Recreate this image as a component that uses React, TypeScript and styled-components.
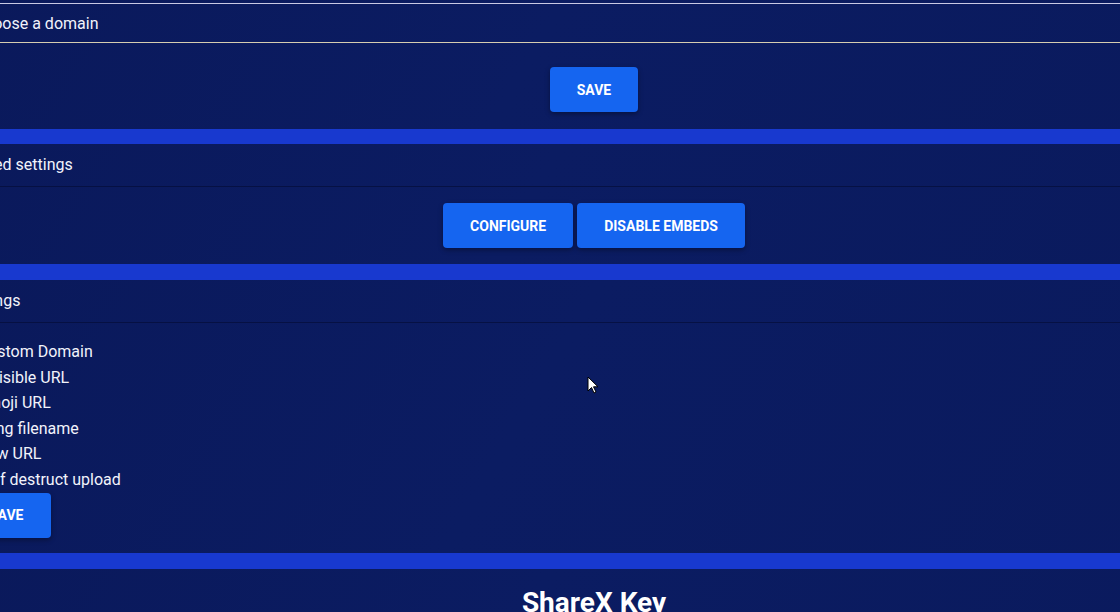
import React from "react";
import styled, { createGlobalStyle } from "styled-components";

const Global = createGlobalStyle`
  html, body {
    margin: 0;
    padding: 0;
    background: #0a1a5c;
    overflow: hidden;
    font-family: Roboto, "Liberation Sans", sans-serif;
    color: #f2f3fb;
  }
`;

const Viewport = styled.div`
  position: relative;
  width: 1120px;
  height: 612px;
  overflow: hidden;
`;

const Main = styled.main`
  margin-left: -44px;
  width: 1276px;
  display: flex;
  flex-direction: column;
  background: #1839cf;
`;

const Card = styled.section<{ $space?: number }>`
  margin-top: ${(p) => p.$space ?? 0}px;
  background: linear-gradient(120deg, #0a195b 0%, #0b1c62 45%, #0a1a5d 100%);
  display: flex;
  flex-direction: column;
`;

const CardHeader = styled.div`
  height: 40px;
  display: flex;
  align-items: center;
  padding: 0 6px 2px;
  font-size: 16px;
  border-bottom: 1px solid rgba(3, 10, 45, 0.55);
`;

const CardBody = styled.div<{ $pt: number; $pb: number; $center?: boolean }>`
  display: flex;
  flex-direction: column;
  align-items: ${(p) => (p.$center ? "center" : "flex-start")};
  padding: ${(p) => `${p.$pt}px 6px ${p.$pb}px`};
`;

const Select = styled.div`
  align-self: stretch;
  height: 38px;
  display: flex;
  align-items: center;
  padding: 0 12px;
  font-size: 16px;
  border-top: 1px solid #c9c9e4;
  border-bottom: 1px solid #d6cdb0;
  margin-bottom: 24px;
`;

const ButtonRow = styled.div`
  display: flex;
  gap: 4px;
`;

const Button = styled.button`
  height: 45px;
  padding: 0 27px;
  border: none;
  border-radius: 4px;
  background: #1565f0;
  color: #ffffff;
  font-family: Roboto, "Liberation Sans", sans-serif;
  font-size: 14px;
  font-weight: 700;
  text-transform: uppercase;
  box-shadow: 0 2px 5px rgba(0, 0, 0, 0.35);
  cursor: pointer;
`;

const OptionList = styled.ul`
  list-style: none;
  margin: 0;
  padding: 0 0 0 16px;
`;

const Option = styled.li`
  font-size: 16px;
  line-height: 25.6px;
`;

const Heading = styled.h2`
  margin: 0;
  padding-top: 17px;
  text-align: center;
  font-size: 28px;
  font-weight: 700;
  color: #ffffff;
  height: 60px;
`;

const Cursor = styled.svg`
  position: absolute;
  left: 587px;
  top: 376px;
  width: 12px;
  height: 19px;
`;

const options = [
  "Custom Domain",
  "Invisible URL",
  "Emoji URL",
  "Long filename",
  "Raw URL",
  "Self destruct upload",
];

export default function App() {
  return (
    <Viewport>
      <Global />
      <Main>
        <Card>
          <CardBody $pt={3} $pb={17} $center>
            <Select>Choose a domain</Select>
            <Button>Save</Button>
          </CardBody>
        </Card>
        <Card $space={15}>
          <CardHeader>Embed settings</CardHeader>
          <CardBody $pt={16} $pb={16} $center>
            <ButtonRow>
              <Button>Configure</Button>
              <Button>Disable embeds</Button>
            </ButtonRow>
          </CardBody>
        </Card>
        <Card $space={16}>
          <CardHeader>Settings</CardHeader>
          <CardBody $pt={16} $pb={15}>
            <OptionList>
              {options.map((o) => (
                <Option key={o}>{o}</Option>
              ))}
            </OptionList>
            <Button>Save</Button>
          </CardBody>
        </Card>
        <Card $space={16}>
          <Heading>ShareX Key</Heading>
        </Card>
      </Main>
      <Cursor viewBox="0 0 12 19">
        <path
          d="M1 1 L1 15 L4.5 11.5 L7 17 L9 16 L6.5 10.8 L11 10.8 Z"
          fill="#ffffff"
          stroke="#000000"
          strokeWidth="1"
          strokeLinejoin="miter"
        />
      </Cursor>
    </Viewport>
  );
}
